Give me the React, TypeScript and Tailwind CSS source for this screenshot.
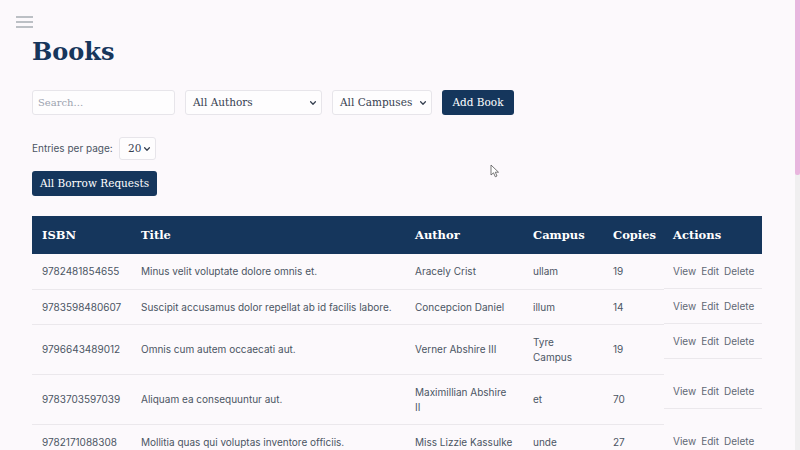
import React from "react";

const serif = { fontFamily: '"DejaVu Serif", serif' };

const rows = [
  { isbn: "9782481854655", title: "Minus velit voluptate dolore omnis et.", author: ["Aracely Crist"], campus: "ullam", copies: "19" },
  { isbn: "9783598480607", title: "Suscipit accusamus dolor repellat ab id facilis labore.", author: ["Concepcion Daniel"], campus: "illum", copies: "14" },
  { isbn: "9796643489012", title: "Omnis cum autem occaecati aut.", author: ["Verner Abshire III"], campus: "Tyre Campus", copies: "19" },
  { isbn: "9783703597039", title: "Aliquam ea consequuntur aut.", author: ["Maximillian Abshire", "II"], campus: "et", copies: "70" },
  { isbn: "9782171088308", title: "Mollitia quas qui voluptas inventore officiis.", author: ["Miss Lizzie Kassulke"], campus: "unde", copies: "27" },
];

function Chevron() {
  return (
    <svg width="8" height="8" viewBox="0 0 10 10" className="shrink-0">
      <path d="M2 3.5 L5 6.5 L8 3.5" fill="none" stroke="#374151" strokeWidth="1.6" strokeLinecap="round" strokeLinejoin="round" />
    </svg>
  );
}

export default function App() {
  return (
    <div className="relative flex h-[450px] w-[800px] overflow-hidden bg-[#fcf9fc]" style={{ fontFamily: "Inter, sans-serif" }}>
      <div className="flex-1 pl-[32px] pr-[33px]">
        <div className="-ml-[16px] mt-[16px] flex h-[12px] w-[17px] flex-col justify-between">
          <div className="h-[2px] bg-[#bcc0c5]" />
          <div className="h-[2px] bg-[#bcc0c5]" />
          <div className="h-[2px] bg-[#bcc0c5]" />
        </div>
        <h1 className="mt-[9px] text-[24px] font-bold leading-[30px] text-[#17365c]" style={serif}>Books</h1>

        <div className="mt-[23px] flex items-center gap-[10px]" style={serif}>
          <div className="flex h-[25px] w-[143px] items-center rounded-[3px] border border-[#e7e5ea] bg-[#fefdfe] px-[5px] text-[10px] text-[#9ca3af]">Search...</div>
          <div className="flex h-[25px] w-[137px] items-center justify-between rounded-[3px] border border-[#e7e5ea] bg-[#fefdfe] pl-[7px] pr-[4px] text-[10.5px] text-[#374151]">
            <span>All Authors</span>
            <Chevron />
          </div>
          <div className="flex h-[25px] w-[100px] items-center justify-between rounded-[3px] border border-[#e7e5ea] bg-[#fefdfe] pl-[7px] pr-[4px] text-[10.5px] text-[#374151]">
            <span>All Campuses</span>
            <Chevron />
          </div>
          <div className="flex h-[25px] w-[72px] items-center justify-center rounded-[3px] bg-[#15365c] text-[10.5px] text-white">Add Book</div>
        </div>

        <div className="mt-[22px] flex items-center">
          <span className="w-[87px] whitespace-nowrap text-[10px] text-[#4b5563]">Entries per page:</span>
          <div className="flex h-[23px] w-[37px] items-center justify-between rounded-[3px] border border-[#e7e5ea] bg-[#fefdfe] pl-[8px] pr-[4px] text-[10.5px] text-[#374151]" style={serif}>
            <span>20</span>
            <Chevron />
          </div>
        </div>

        <div className="mt-[11px] flex h-[25px] w-[125px] items-center justify-center rounded-[3px] bg-[#15365c] text-[10.5px] text-white" style={serif}>All Borrow Requests</div>

        <table className="mt-[20px] w-[730px] table-fixed border-collapse">
          <colgroup>
            <col className="w-[100px]" />
            <col className="w-[274px]" />
            <col className="w-[118px]" />
            <col className="w-[80px]" />
            <col className="w-[60px]" />
            <col className="w-[98px]" />
          </colgroup>
          <thead>
            <tr className="h-[38px] bg-[#15365c] text-left text-[11.5px] font-bold text-white" style={serif}>
              <th className="px-[10px] pt-[2px]">ISBN</th>
              <th className="px-[9px] pt-[2px]">Title</th>
              <th className="px-[9px] pt-[2px]">Author</th>
              <th className="px-[9px] pt-[2px]">Campus</th>
              <th className="px-[9px] pt-[2px]">Copies</th>
              <th className="px-[9px] pt-[2px]">Actions</th>
            </tr>
          </thead>
          <tbody className="text-[10px] leading-[15px] text-[#4b5563]">
            {rows.map((r) => (
              <tr key={r.isbn}>
                <td className="border-b border-[#ebe8ec] px-[10px] pb-[9px] pt-[10px] align-middle">{r.isbn}</td>
                <td className="border-b border-[#ebe8ec] px-[9px] pb-[9px] pt-[10px] align-middle">{r.title}</td>
                <td className="border-b border-[#ebe8ec] px-[9px] pb-[9px] pt-[10px] align-middle">
                  {r.author.map((a, i) => (
                    <span key={i} className="block">{a}</span>
                  ))}
                </td>
                <td className="border-b border-[#ebe8ec] pl-[9px] pr-[12px] pb-[9px] pt-[10px] align-middle">{r.campus}</td>
                <td className="border-b border-[#ebe8ec] px-[9px] pb-[9px] pt-[10px] align-middle">{r.copies}</td>
                <td className="p-0 align-top">
                  <div className="flex gap-[5px] border-b border-[#ebe8ec] px-[9px] pb-[9px] pt-[10px] text-[#5f6875]">
                    <span>View</span>
                    <span>Edit</span>
                    <span>Delete</span>
                  </div>
                </td>
              </tr>
            ))}
          </tbody>
        </table>
      </div>

      <div className="flex w-[5px] flex-col bg-[#f0eff0]">
        <div className="h-[175px] rounded-b-[2px] bg-[#e9b6de]" />
      </div>

      <svg className="absolute left-[490px] top-[164px]" width="10" height="14" viewBox="0 0 10 14">
        <path d="M1 1 L1 11 L3.5 8.8 L5.3 12.8 L7 12 L5.3 8.2 L8.5 8.2 Z" fill="#ffffff" stroke="#555" strokeWidth="0.8" strokeLinejoin="round" />
      </svg>
    </div>
  );
}
